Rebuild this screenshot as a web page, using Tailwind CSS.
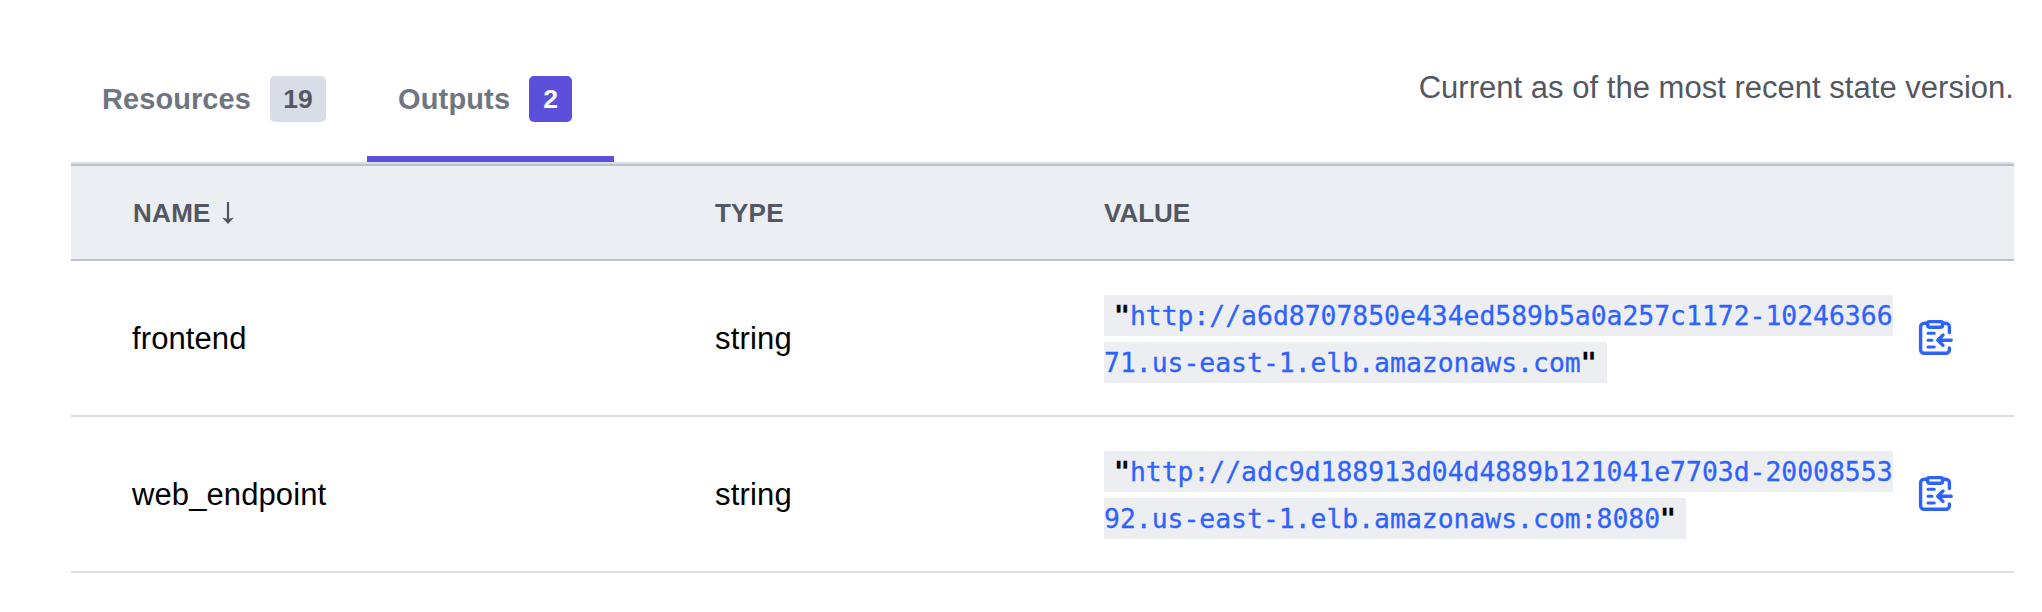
<!DOCTYPE html>
<html lang="en">
<head>
<meta charset="utf-8">
<title>Outputs</title>
<script src="https://cdn.jsdelivr.net/npm/@tailwindcss/browser@4"></script>
</head>
<body class="h-[612px] overflow-hidden bg-white pl-[71px] pr-[28px] font-['Liberation_Sans',Arial,sans-serif] text-black">
<svg class="hidden">
  <symbol id="clip" viewBox="0 0 38 38">
    <g fill="none" stroke="currentColor" stroke-width="3.4" stroke-linecap="round" stroke-linejoin="round">
      <path d="M10.2 5.2H7.2a3.6 3.6 0 0 0-3.6 3.6v22.9a3.6 3.6 0 0 0 3.6 3.6h21.6a3.6 3.6 0 0 0 3.6-3.6V30M32.4 14.6V8.8a3.6 3.6 0 0 0-3.6-3.6h-3.2"/>
      <rect x="10.7" y="3.6" width="14.8" height="5.6" rx="1.6"/>
      <path stroke-width="3" d="M11 15.3h6.3M11 22.2h4M11 28.9h6.3"/>
      <path d="M34.2 22.2H21.3M26 17l-5.2 5.2 5.2 5.2"/>
    </g>
  </symbol>
</svg>
<div class="flex h-[164px] justify-between border-b-2 border-[#dce0e6]">
  <nav class="flex text-[29px] font-bold text-[#6f7682]">
    <div class="flex h-[162px] w-[296px] items-center pl-[31px] pt-9"><span class="w-[168px] pt-0.5 tracking-[0.06px]">Resources</span><span class="flex h-[46px] w-14 items-center justify-center rounded-[5px] bg-[#d9dde6] pt-0.5 text-[26.5px] text-[#545761]">19</span></div>
    <div class="flex h-[162px] w-[247px] items-center border-b-[6px] border-[#5b4fdb] pl-[31px] pt-[42px]"><span class="w-[131px] pt-0.5 tracking-[0.15px]">Outputs</span><span class="flex h-[46px] w-[43px] items-center justify-center rounded-[5px] bg-[#5b4fdb] pt-0.5 text-[26.5px] text-white">2</span></div>
  </nav>
  <p class="pt-[68px] text-[31px] leading-[40px] tracking-[0.02px] text-[#535761]">Current as of the most recent state version.</p>
</div>
<div class="grid h-[97px] grid-cols-[583px_389px_1fr] items-center border-y-2 border-[#bac1cc] bg-[#ebeef2] pl-[61px] text-[26px] font-bold text-[#535761]">
  <div class="flex items-center gap-[11px]"><span class="pt-0.5 pl-px tracking-[0.3px]">NAME</span><svg class="h-[22px] w-3" viewBox="0 0 12 22"><path d="M6 0v18" stroke="currentColor" stroke-width="2.2" fill="none"/><path d="M0 15.5l6 6.5 6-6.5-6 1.5z" fill="currentColor"/></svg></div>
  <div class="pt-0.5 tracking-[0.2px]">TYPE</div>
  <div class="pt-0.5">VALUE</div>
</div>
<div class="grid h-[156px] grid-cols-[583px_389px_1fr] items-center border-b-2 border-[#dcdee3] pl-[61px] text-[31px]">
  <div class="pt-0.5 tracking-[0.1px]">frontend</div>
  <div class="pt-0.5 tracking-[0.2px]">string</div>
  <div class="flex items-center">
    <div class="mt-px w-[790px] font-['DejaVu_Sans_Mono',monospace] text-[26.4px] leading-[47px]"><code class="bg-[#edeef2] px-[10px] py-[5px] font-['DejaVu_Sans_Mono',monospace] text-[#2e62fe] [-webkit-text-stroke:0.3px]"><b class="text-black">"</b>http://a6d8707850e434ed589b5a0a257c1172-10246366<br>71.us-east-1.elb.amazonaws.com<b class="text-black">"</b></code></div>
    <svg class="mb-0.5 ml-[23px] size-[38px] text-[#2e62fe]"><use href="#clip"/></svg>
  </div>
</div>
<div class="grid h-[156px] grid-cols-[583px_389px_1fr] items-center border-b-2 border-[#dcdee3] pl-[61px] text-[31px]">
  <div class="pt-0.5 tracking-[0.1px]">web_endpoint</div>
  <div class="pt-0.5 tracking-[0.2px]">string</div>
  <div class="flex items-center">
    <div class="mt-px w-[790px] font-['DejaVu_Sans_Mono',monospace] text-[26.4px] leading-[47px]"><code class="bg-[#edeef2] px-[10px] py-[5px] font-['DejaVu_Sans_Mono',monospace] text-[#2e62fe] [-webkit-text-stroke:0.3px]"><b class="text-black">"</b>http://adc9d188913d04d4889b121041e7703d-20008553<br>92.us-east-1.elb.amazonaws.com:8080<b class="text-black">"</b></code></div>
    <svg class="mb-0.5 ml-[23px] size-[38px] text-[#2e62fe]"><use href="#clip"/></svg>
  </div>
</div>
</body>
</html>
